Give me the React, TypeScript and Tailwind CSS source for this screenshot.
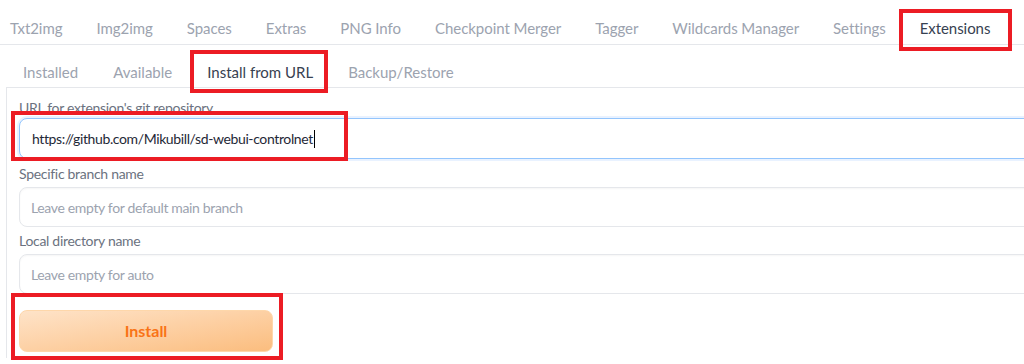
import React from "react";

const topTabs = [
  "Txt2img",
  "Img2img",
  "Spaces",
  "Extras",
  "PNG Info",
  "Checkpoint Merger",
  "Tagger",
  "Wildcards Manager",
  "Settings",
];

const subTabs = ["Installed", "Available"];

function RedBox({ className }: { className: string }) {
  return (
    <span
      className={`pointer-events-none absolute border-4 border-[#ec1c24] ${className}`}
    />
  );
}

function Field({
  label,
  placeholder,
  top,
}: {
  label: string;
  placeholder: string;
  top: string;
}) {
  return (
    <div className={`flex flex-col ${top}`}>
      <span className="text-[14px] leading-[20px] tracking-[-0.3px] text-[#6b7280]">
        {label}
      </span>
      <div className="mt-[3px] flex h-[40px] w-[1040px] items-center rounded-[8px] border border-[#e5e7eb] bg-white px-[11px] text-[14px] tracking-[-0.35px] text-[#9ca3af] shadow-[inset_0_1px_2px_rgba(0,0,0,0.04)]">
        {placeholder}
      </div>
    </div>
  );
}

export default function App() {
  return (
    <div className="relative h-[364px] w-[1024px] overflow-hidden bg-white font-['Lato','Noto_Sans',sans-serif]">
      {/* top tab bar */}
      <div className="flex h-[45px] items-end gap-[34px] border-b border-[#e5e7eb] pl-[10px] text-[15px] tracking-[-0.05px] text-[#9ca3af]">
        {topTabs.map((t) => (
          <span key={t} className="h-[31px] whitespace-nowrap leading-[30px]">
            {t}
          </span>
        ))}
        <span className="relative h-[31px] whitespace-nowrap leading-[30px] text-[#374151]">
          Extensions
          <RedBox className="-left-[21px] -right-[22px] -top-[4px] bottom-[-7px]" />
        </span>
      </div>

      {/* sub tabs */}
      <div className="flex h-[42px] items-center gap-[35px] pl-[23px] pt-[12px] text-[15px] tracking-[0px] text-[#9ca3af]">
        {subTabs.map((t) => (
          <span key={t} className="whitespace-nowrap">
            {t}
          </span>
        ))}
        <span className="relative whitespace-nowrap text-[#374151]">
          Install from URL
          <RedBox className="-left-[17px] -right-[15px] -top-[11px] -bottom-[10px]" />
        </span>
        <span className="whitespace-nowrap">Backup/Restore</span>
      </div>

      {/* panel */}
      <div className="ml-[6px] w-[1060px] border-l border-t border-[#e5e7eb] pl-[12px] pt-[10px] pb-[6px]">
        <div className="relative flex flex-col">
          <span className="text-[14px] leading-[20px] tracking-[-0.3px] text-[#6b7280]">
            URL for extension's git repository
          </span>
          <div className="flex h-[41px] w-[1040px] items-center rounded-[8px] border border-[#93c5fd] bg-white px-[12px] text-[14px] tracking-[-0.38px] text-[#1f2937] shadow-[0_0_0_2px_rgba(191,219,254,0.35)]">
            https://github.com/Mikubill/sd-webui-controlnet
            <span className="ml-[1px] inline-block h-[18px] w-[1px] bg-black" />
          </div>
          <RedBox className="left-[-8px] top-[13px] h-[50px] w-[337px]" />
        </div>

        <Field
          label="Specific branch name"
          placeholder="Leave empty for default main branch"
          top="mt-[5px]"
        />
        <Field
          label="Local directory name"
          placeholder="Leave empty for auto"
          top="mt-[4px]"
        />

        <div className="relative mt-[16px] w-[254px]">
          <button className="h-[42px] w-[254px] rounded-[8px] border border-[#fed7aa] bg-gradient-to-br from-[#fee3c8] to-[#fbbd7e] text-[16px] font-bold text-[#f97316]">
            Install
          </button>
          <RedBox className="left-[-8px] top-[-17px] h-[67px] w-[272px]" />
        </div>
      </div>
    </div>
  );
}
